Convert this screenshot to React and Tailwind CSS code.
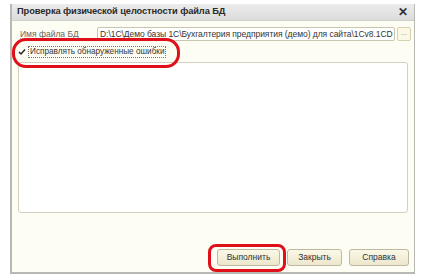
export default function App() {
  const font = { fontFamily: '"Liberation Sans", Arial, sans-serif' };
  return (
    <div className="w-[424px] h-[278px] bg-white pl-[10px] pt-[4px] overflow-hidden" style={font}>
      <div className="relative w-[405px] h-[270px] flex flex-col bg-[#fefdf3] border-l-2 border-b-2 border-r border-[#b8b8b4]">
        {/* title bar */}
        <div className="h-[17px] flex items-center justify-between pl-[5px] pr-[6px] bg-gradient-to-b from-[#ececec] to-[#dcdcdc] border-b border-[#d0d0cc]">
          <span className="text-[9.3px] font-bold text-[#2a2a2a] tracking-[-0.1px]">Проверка физической целостности файла БД</span>
          <span className="text-[12px] font-bold text-[#333] leading-none">✕</span>
        </div>
        {/* file row */}
        <div className="flex items-center mt-[6px] pl-[8px] pr-[3px] h-[14px]">
          <span className="w-[77px] text-[8.5px] text-[#666] underline decoration-dotted decoration-[#aaa]">Имя файла БД</span>
          <div className="w-[298px] h-[14px] bg-white border border-[#c9c6b0] rounded-[2px] flex items-center px-[2px] overflow-hidden">
            <span className="text-[8.5px] text-[#333] whitespace-nowrap tracking-[-0.05px]">D:\1С\Демо базы 1С\Бухгалтерия предприятия (демо) для сайта\1Cv8.1CD</span>
          </div>
          <div className="ml-[2px] w-[14px] h-[14px] border border-[#d6d2b0] rounded-[2px] bg-[#fbf8e6] flex items-end justify-center pb-[3px]">
            <span className="text-[8px] leading-none text-[#b89a30]">...</span>
          </div>
        </div>
        {/* checkbox row */}
        <div className="flex items-center mt-[5px] pl-[6px] h-[12px]">
          <div className="w-[8px] h-[8px] flex items-center justify-center">
            <svg width="8" height="8" viewBox="0 0 8 8"><path d="M1 4 L3 6 L7 1.5" stroke="#222" strokeWidth="1.4" fill="none" /></svg>
          </div>
          <span className="ml-[2px] text-[8.2px] text-[#333] border border-dotted border-[#777] px-[1px] leading-[10px]">Исправлять обнаруженные ошибки</span>
        </div>
        {/* big box */}
        <div className="mt-[4px] mx-[6px] h-[151px] bg-white border border-[#d3d0c0] rounded-[3px]" />
        {/* buttons */}
        <div className="flex-1" />
        <div className="flex justify-end gap-[7px] pr-[5px] mb-[6px]">
          <button className="w-[63px] h-[17px] text-[8.5px] text-[#333] rounded-[3px] border border-[#bdb8a0] bg-gradient-to-b from-[#fbf8e8] to-[#ece7cc]">Выполнить</button>
          <button className="w-[55px] h-[17px] text-[8.5px] text-[#333] rounded-[3px] border border-[#bdb8a0] bg-gradient-to-b from-[#fbf8e8] to-[#ece7cc]">Закрыть</button>
          <button className="w-[60px] h-[17px] text-[8.5px] text-[#333] rounded-[3px] border border-[#bdb8a0] bg-gradient-to-b from-[#fbf8e8] to-[#ece7cc]">Справка</button>
        </div>
        {/* annotations */}
        <div className="absolute left-[0px] top-[34px] w-[168px] h-[30px] border-[3px] border-[#e0101a] rounded-[14px]" />
        <div className="absolute left-[196px] top-[240px] w-[78px] h-[28px] border-[3px] border-[#e0101a] rounded-[8px]" />
      </div>
    </div>
  );
}
